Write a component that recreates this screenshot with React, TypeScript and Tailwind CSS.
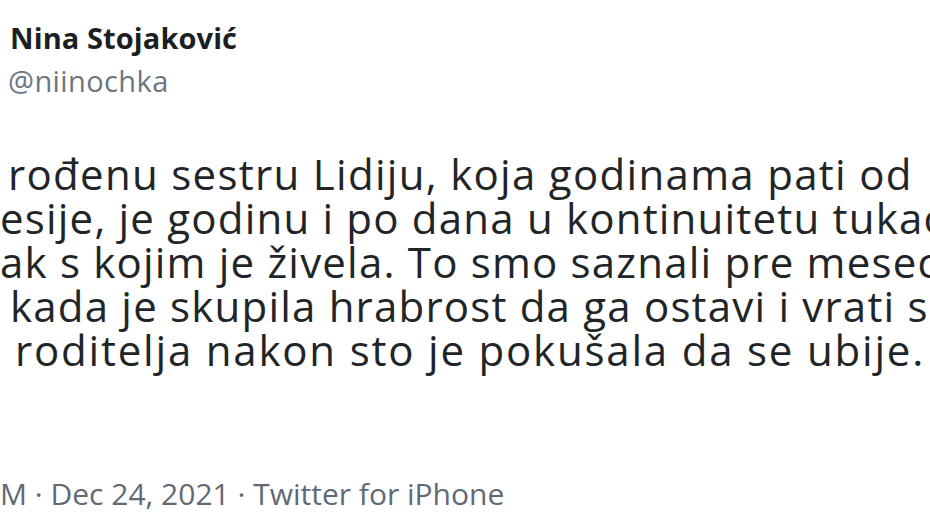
import React from "react";

const lines: { text: string; cls: string }[] = [
  { text: "rođenu sestru Lidiju, koja godinama pati od", cls: "ml-[8px] tracking-[1.3px]" },
  { text: "esije, je godinu i po dana u kontinuitetu tukao", cls: "ml-[0px] tracking-[1.2px]" },
  { text: "ak s kojim je živela. To smo saznali pre mesec", cls: "ml-[0px] tracking-[1.2px]" },
  { text: "kada je skupila hrabrost da ga ostavi i vrati se", cls: "ml-[10px] tracking-[1.2px]" },
  { text: "roditelja nakon sto je pokušala da se ubije.", cls: "ml-[15px] tracking-[1.8px]" },
];

export default function App() {
  return (
    <div
      className="w-[930px] h-[525px] overflow-hidden bg-white flex flex-col"
      style={{ fontFamily: "'Open Sans', 'Liberation Sans', Arial, sans-serif" }}
    >
      <div className="pt-[18px] pl-[10px] flex flex-col">
        <div className="text-[29px] leading-[40px] font-bold tracking-[0.1px] text-[#1c1f22] whitespace-nowrap">
          Nina Stojaković
        </div>
        <div className="mt-[3px] text-[29px] leading-[40px] tracking-[0.4px] text-[#6a7682] whitespace-nowrap -ml-[2px]">
          @niinochka
        </div>
      </div>
      <div className="mt-[51px] flex flex-col text-[#222528] text-[42px] leading-[44px]">
        {lines.map((l, i) => (
          <div key={i} className={"whitespace-nowrap " + l.cls}>
            {l.text}
          </div>
        ))}
      </div>
      <div className="mt-[104px] text-[30px] leading-[36px] text-[#5f6a75] whitespace-nowrap">
        M · Dec 24, 2021 · Twitter for iPhone
      </div>
    </div>
  );
}
